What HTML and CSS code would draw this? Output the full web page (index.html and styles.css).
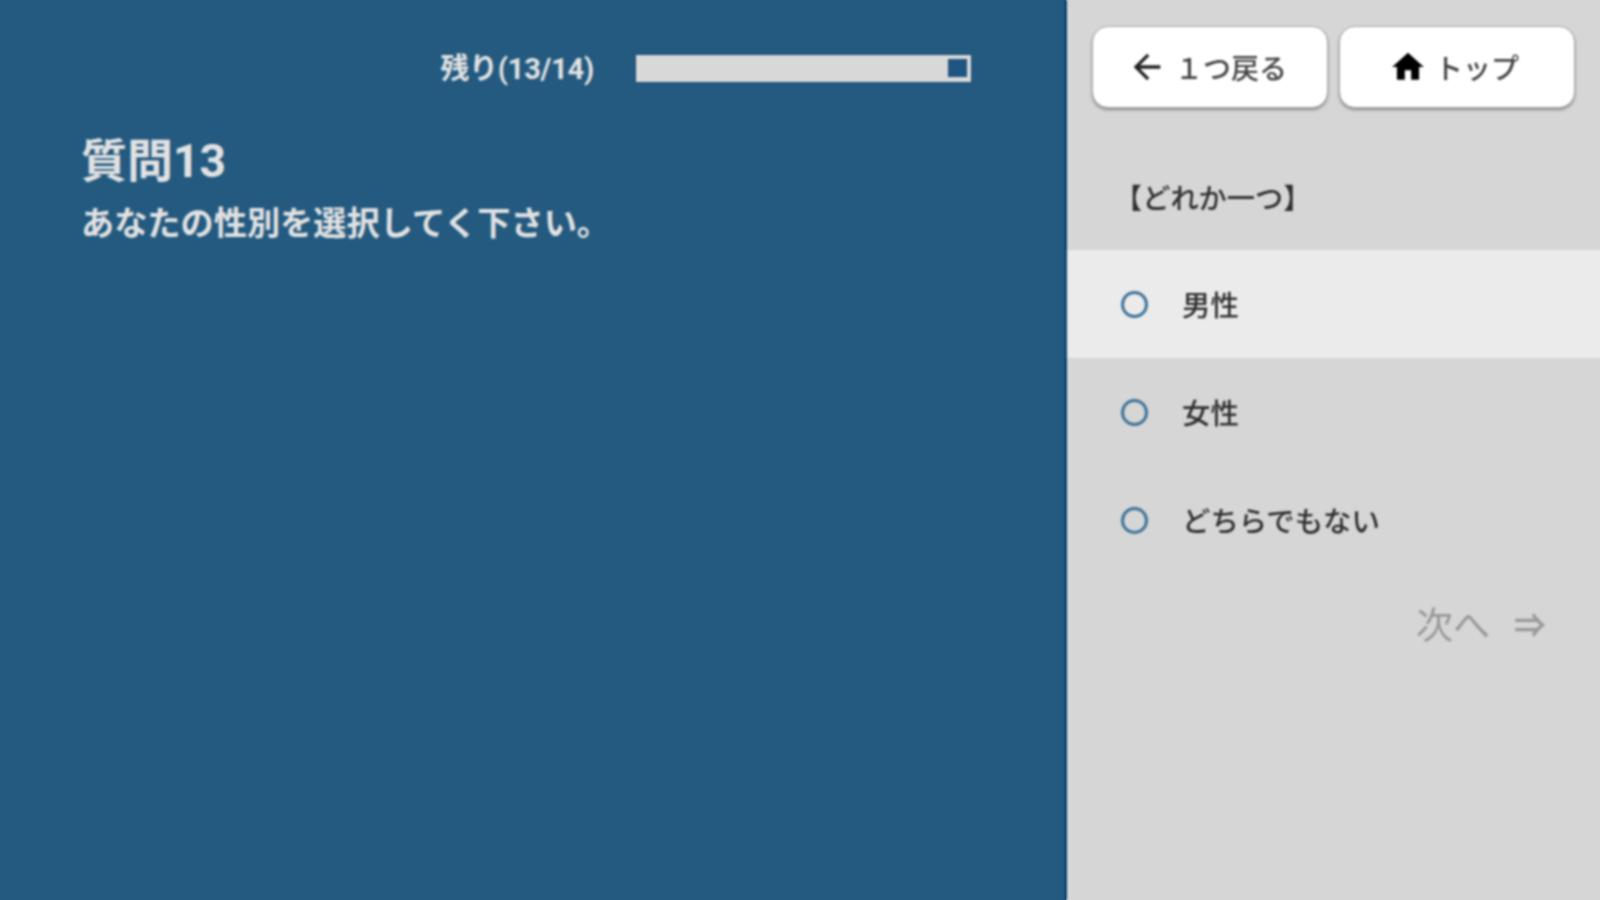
FILE: index.html
```html
<!DOCTYPE html>
<html lang="ja">
<head>
<meta charset="utf-8">
<title>質問13</title>
<link rel="stylesheet" href="styles.css">
</head>
<body>
<div class="app">
  <main class="question">
    <div class="progress">
      <span class="progress-label">残り(13/14)</span>
      <div class="bar"><div class="bar-fill"></div></div>
    </div>
    <h1 class="q-title">質問13</h1>
    <p class="q-text">あなたの性別を選択してく下さい。</p>
  </main>
  <aside class="side">
    <div class="nav">
      <button class="nav-btn" type="button">
        <svg class="icon-back" viewBox="0 0 24 24"><path d="M20 11H7.83l5.59-5.59L12 4l-8 8 8 8 1.41-1.41L7.83 13H20z"/></svg>
        <span>１つ戻る</span>
      </button>
      <button class="nav-btn" type="button">
        <svg class="icon-home" viewBox="0 0 24 24"><path d="M10 20v-6h4v6h5v-8h3L12 3 2 12h3v8z"/></svg>
        <span>トップ</span>
      </button>
    </div>
    <div class="hint">【どれか一つ】</div>
    <ul class="options">
      <li class="option is-hover"><span class="radio"></span><span class="option-label">男性</span></li>
      <li class="option"><span class="radio"></span><span class="option-label">女性</span></li>
      <li class="option"><span class="radio"></span><span class="option-label">どちらでもない</span></li>
    </ul>
    <div class="next"><span>次へ</span><span class="next-arrow">⇒</span></div>
  </aside>
</div>
</body>
</html>
```

FILE: styles.css
```css
* { box-sizing: border-box; }
html, body { margin: 0; height: 100%; }
body {
  font-family: "Noto Sans CJK JP", "Noto Sans", sans-serif;
  background: linear-gradient(90deg, #245a80 1066px, #d6d6d6 1066px);
  overflow: hidden;
}
.app {
  display: flex;
  width: 1610px;
  height: 900px;
  filter: blur(0.9px);
}
.question {
  width: 1067px;
  background: #245a80;
  color: #e2e2e2;
  padding: 0 82px 0 81px;
  border-right: 3px solid #0f4a75;
}
.progress {
  display: flex;
  justify-content: flex-end;
  align-items: center;
  gap: 42px;
  height: 54px;
  margin: 41px 11px 0 0;
}
.progress-label {
  font-family: Roboto, "Noto Sans CJK JP", sans-serif;
  font-size: 29px;
  font-weight: 700;
  line-height: 40px;
  margin-top: 2px;
  letter-spacing: -0.2px;
}
.bar {
  display: flex;
  justify-content: flex-end;
  width: 335px;
  height: 27px;
  padding: 4px 4px 5px;
  background: #d8d8d8;
  box-shadow: 0 0 0 1px #1a5079;
}
.bar-fill { width: 19px; background: #1f5580; }
.q-title {
  margin: 34px 0 0;
  font-family: Roboto, "Noto Sans CJK JP", sans-serif;
  font-size: 46px;
  font-weight: 700;
  line-height: 64px;
}
.q-text {
  margin: 4px 0 0;
  font-size: 33.2px;
  font-weight: 700;
  line-height: 48px;
}
.side {
  flex: 1;
  display: flex;
  flex-direction: column;
  color: #2e2e2e;
}
.nav {
  display: flex;
  gap: 11px;
  padding: 26px 35px 0 25px;
}
.nav-btn {
  flex: 1;
  height: 82px;
  display: flex;
  align-items: center;
  justify-content: center;
  gap: 8px;
  background: #fff;
  border: 1px solid #a8a8a8;
  border-radius: 16px;
  box-shadow: 0 2px 3px rgba(0, 0, 0, 0.35);
  font-family: inherit;
  font-size: 28px;
  font-weight: 500;
  color: #444;
  padding: 0 6px 0 0;
}
.icon-back { width: 40px; height: 40px; fill: #222; }
.icon-home { width: 38px; height: 38px; fill: #000; }
.hint {
  height: 142px;
  padding: 66px 0 0 47px;
  font-size: 28.2px;
  font-weight: 500;
  line-height: 46px;
}
.options { list-style: none; margin: 0; padding: 0; }
.option {
  display: flex;
  align-items: center;
  gap: 34px;
  height: 108px;
  padding-left: 54px;
  font-size: 28.4px;
  font-weight: 500;
}
.option-label { padding-bottom: 2px; }
.is-hover { background: #ebebeb; }
.radio {
  width: 27px;
  height: 27px;
  border: 3px solid #3f7399;
  border-radius: 50%;
}
.next {
  display: flex;
  justify-content: flex-end;
  align-items: center;
  gap: 24px;
  padding: 24px 64px 0 0;
  font-size: 37px;
  line-height: 50px;
  color: #999;
}
.next-arrow { font-size: 32px; font-weight: 700; }
```
